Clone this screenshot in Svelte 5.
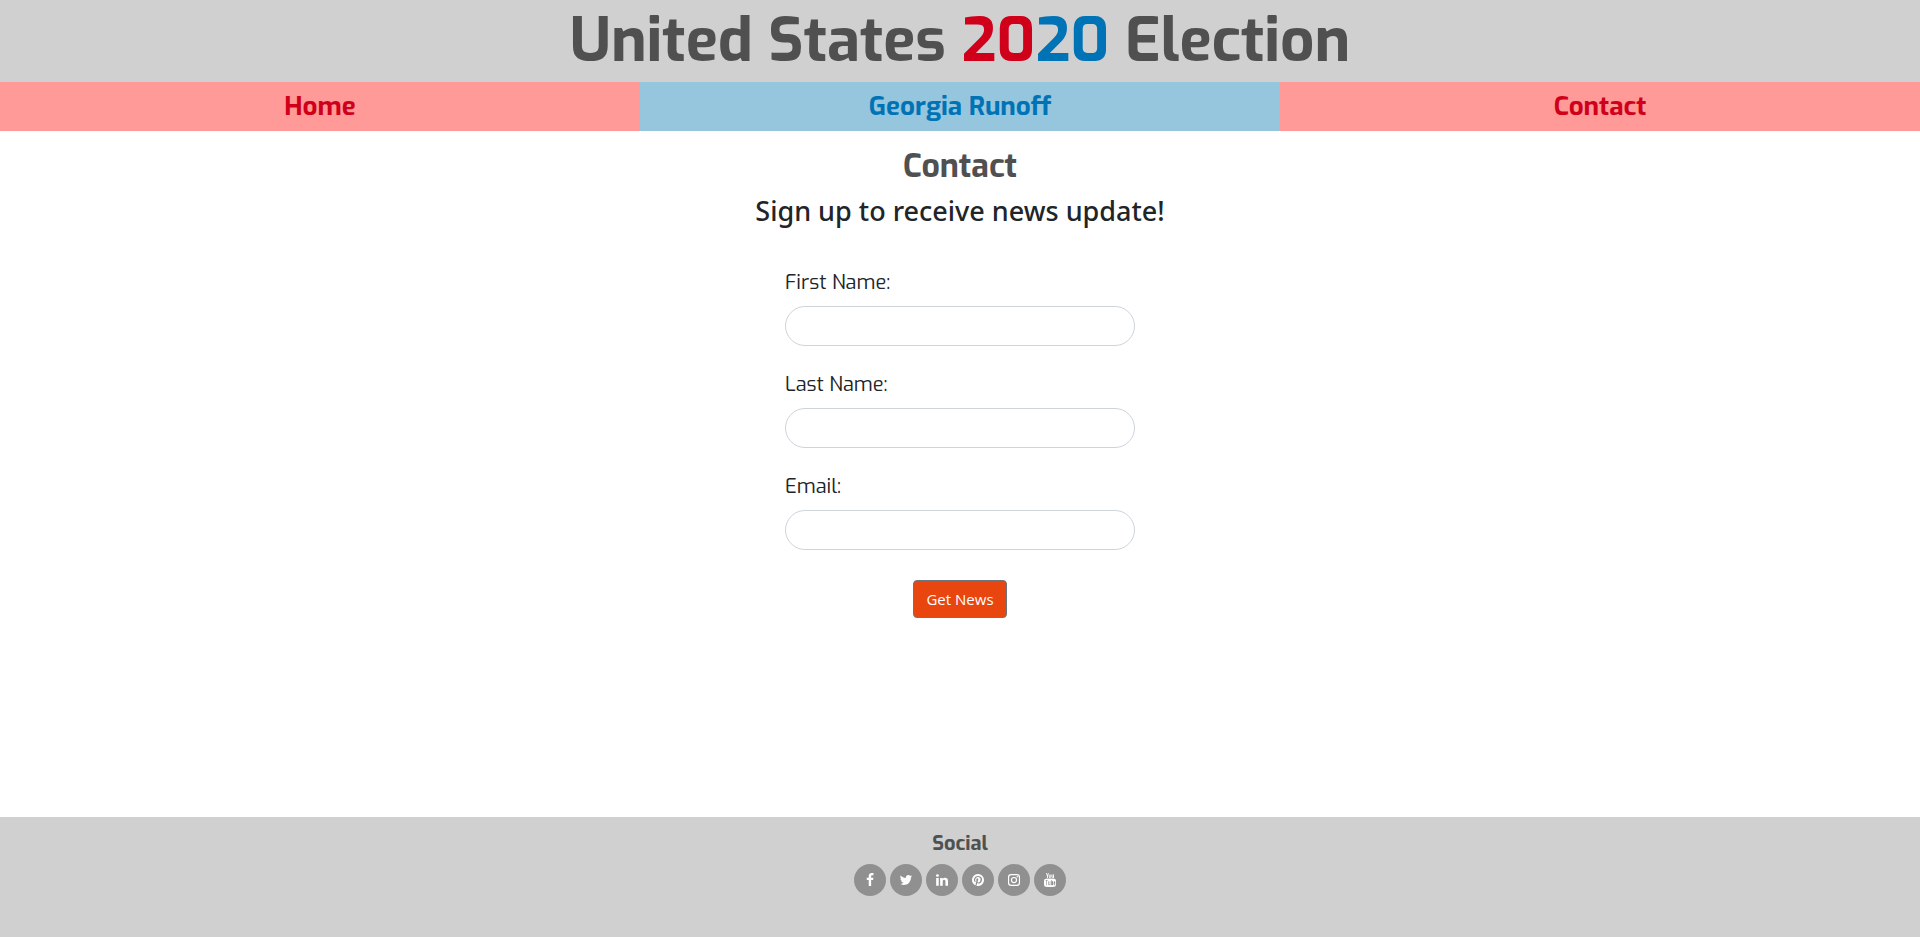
<script>
  const pages = [
    { label: 'Home', tone: 'red' },
    { label: 'Georgia Runoff', tone: 'blue' },
    { label: 'Contact', tone: 'red' }
  ];

  const fields = [
    { id: 'first-name', label: 'First Name:', type: 'text' },
    { id: 'last-name', label: 'Last Name:', type: 'text' },
    { id: 'email', label: 'Email:', type: 'email' }
  ];

  const socials = [
    {
      name: 'Facebook',
      path: 'M1343 12v264h-157q-86 0-116 36t-30 108v189h293l-39 296h-254v759h-306v-759h-255v-296h255v-218q0-186 104-288.5t277-102.5q147 0 228 12z'
    },
    {
      name: 'Twitter',
      path: 'M1684 408q-67 98-162 167 1 14 1 42 0 130-38 259.5t-115.5 248.5-184.5 210.5-258 146-323 54.5q-271 0-496-145 35 4 78 4 225 0 401-138-105-2-188-64.5t-114-159.5q33 5 61 5 43 0 85-11-112-23-185.5-111.5t-73.5-205.5v-4q68 38 146 41-66-44-105-115t-39-154q0-88 44-163 121 149 294.5 238.5t371.5 99.5q-8-38-8-74 0-134 94.5-228.5t228.5-94.5q140 0 236 102 109-21 205-78-37 115-142 178 93-10 186-50z'
    },
    {
      name: 'LinkedIn',
      path: 'M477 625v991h-330v-991h330zm21-306q1 73-50.5 122t-135.5 49h-2q-82 0-132-49t-50-122q0-74 51.5-122.5t134.5-48.5 133 48.5 51 122.5zm1166 729v568h-329v-530q0-105-40.5-164.5t-126.5-59.5q-63 0-105.5 34.5t-63.5 85.5q-11 30-11 81v553h-329q2-399 2-647t-1-296l-1-48h329v144h-2q20-32 41-56t56.5-52 87-43.5 114.5-15.5q171 0 275 113.5t104 332.5z'
    },
    {
      name: 'Pinterest',
      path: 'M1664 896q0 209-103 385.5t-279.5 279.5-385.5 103q-111 0-218-32 59-93 78-164 9-34 54-211 20 39 73 67.5t114 28.5q121 0 216-68.5t147-188.5 52-270q0-114-59.5-214t-172.5-163-255-63q-105 0-196 29t-154.5 77-109 110.5-67 129.5-21.5 134q0 104 40 183t117 111q30 12 38-20 2-7 8-31t8-30q6-23-11-43-51-61-51-151 0-151 104.5-259.5t273.5-108.5q151 0 235.5 82t84.5 213q0 170-68.5 289t-175.5 119q-61 0-98-43.5t-23-104.5q8-35 26.5-93.5t30-103 11.5-75.5q0-50-27-83t-77-33q-62 0-105 57t-43 142q0 73 25 122l-99 418q-17 70-13 177-206-91-333-281t-127-423q0-209 103-385.5t279.5-279.5 385.5-103 385.5 103 279.5 279.5 103 385.5z'
    },
    { name: 'Instagram' },
    { name: 'YouTube' }
  ];
</script>

<div class="page">
  <header>
    <h1>United States <span class="red">20</span><span class="blue">20</span> Election</h1>
  </header>

  <nav>
    {#each pages as page}
      <a class={page.tone} href="#top">{page.label}</a>
    {/each}
  </nav>

  <main>
    <h2>Contact</h2>
    <h3>Sign up to receive news update!</h3>
    <form>
      {#each fields as field}
        <div class="field">
          <label for={field.id}>{field.label}</label>
          <input id={field.id} type={field.type} />
        </div>
      {/each}
      <button type="button">Get News</button>
    </form>
  </main>

  <footer>
    <h4>Social</h4>
    <div class="socials">
      {#each socials as social}
        <a href="#top" aria-label={social.name}>
          <svg viewBox="0 0 1792 1792" aria-hidden="true">
            {#if social.path}
              <path d={social.path} />
            {:else if social.name === 'Instagram'}
              <g class="line">
                <rect x="200" y="200" width="1392" height="1392" rx="340" />
                <circle cx="896" cy="896" r="325" />
              </g>
              <circle cx="1306" cy="486" r="92" />
            {:else}
              <g class="line thin">
                <path d="M440 20l130 350v270M700 20l-130 350" />
                <rect x="800" y="240" width="190" height="350" rx="90" />
                <path d="M1150 180v330q0 110 90 80t100-120M1350 180v460" />
              </g>
              <path
                fill-rule="evenodd"
                d="M340 725q556-40 1112 0 180 15 200 200 30 310 0 620-20 190-200 210-556 50-1112 0-180-20-200-210-30-310 0-620 20-185 200-200zM320 880v85h110v600h80v-600h110v-85zM680 1060v410q0 100 70 100 60 0 110-60v55h80v-505h-80v390q-90 90-100 20v-410zM1050 880v685h75v-45q150 100 180-50v-340q-40-160-180-50v-200zM1390 1160v300q30 120 150 105v-70q-75-10-70-125h100v-210q-20-110-90-110-70 10-90 110z"
              />
            {/if}
          </svg>
        </a>
      {/each}
    </div>
  </footer>
</div>

<style>
  :global(body) {
    margin: 0;
    background: #fff;
  }

  .page {
    display: flex;
    flex-direction: column;
    min-height: 100vh;
    color: #212529;
    font-family: Exo, 'Exo 2', Roboto, sans-serif;
    text-align: center;
  }

  h1,
  h2,
  h3,
  h4 {
    margin: 0;
  }

  header {
    padding: 3px 16px;
    background: #d0d0d0;
    color: #505050;
  }

  h1 {
    font-size: 60px;
    line-height: 76px;
    font-weight: 700;
  }

  h1 .red {
    color: #d0001b;
  }

  h1 .blue {
    color: #0073b6;
  }

  nav {
    display: grid;
    grid-template-columns: repeat(3, 1fr);
  }

  nav a {
    padding: 9px 0 8px;
    font-size: 26px;
    line-height: 32px;
    font-weight: 700;
    text-decoration: none;
  }

  nav .red {
    background: #ff9a98;
    color: #d0001b;
  }

  nav .blue {
    background: #95c6dd;
    color: #0073b6;
  }

  main {
    flex: 1;
    padding: 15px 16px;
  }

  h2 {
    color: #505050;
    font-size: 32px;
    line-height: 40px;
    font-weight: 700;
  }

  h3 {
    margin-top: 9px;
    font-family: 'Segoe UI', 'Noto Sans', sans-serif;
    font-size: 27px;
    line-height: 32px;
    font-weight: 500;
  }

  form {
    display: flex;
    flex-direction: column;
    align-items: center;
    gap: 24px;
    margin-top: 41px;
  }

  .field {
    display: flex;
    flex-direction: column;
    gap: 8px;
    width: 350px;
    max-width: 100%;
    text-align: left;
  }

  label {
    font-size: 20px;
    line-height: 30px;
  }

  input {
    box-sizing: border-box;
    width: 100%;
    height: 40px;
    padding: 6px 20px;
    border: 1px solid #ced4da;
    border-radius: 20px;
    background: #fff;
    font: inherit;
  }

  button {
    margin-top: 6px;
    padding: 6px 12px;
    border: 1px solid #6c757d;
    border-radius: 4px;
    background: #e8450f;
    color: #fff;
    font-family: 'Segoe UI', 'Open Sans', sans-serif;
    font-size: 15px;
    line-height: 24px;
  }

  footer {
    padding: 13px 16px 41px;
    background: #d0d0d0;
  }

  h4 {
    color: #505050;
    font-size: 20px;
    line-height: 28px;
    font-weight: 700;
  }

  .socials {
    display: flex;
    justify-content: center;
    gap: 4px;
    margin-top: 6px;
  }

  .socials a {
    display: grid;
    place-items: center;
    width: 32px;
    height: 32px;
    border-radius: 50%;
    background: #909090;
  }

  svg {
    width: 14px;
    height: 14px;
    fill: #fff;
  }

  .line {
    fill: none;
    stroke: #fff;
    stroke-width: 150;
  }

  .thin {
    stroke-width: 120;
  }
</style>
